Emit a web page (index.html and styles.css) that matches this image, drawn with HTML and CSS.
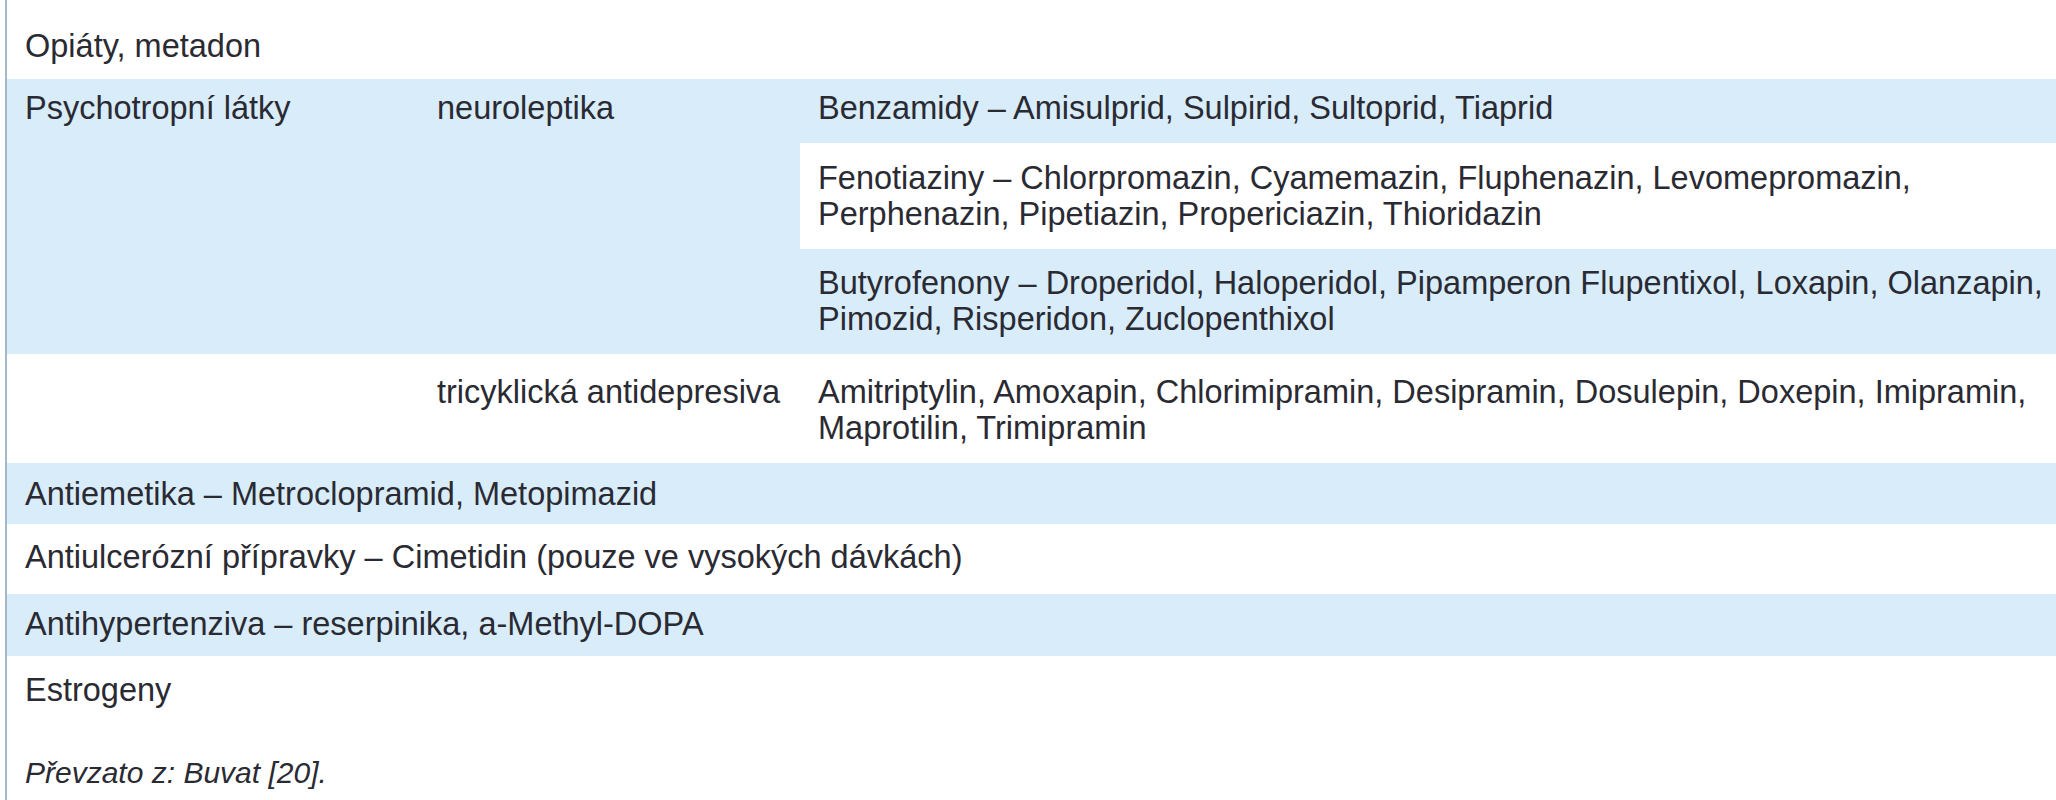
FILE: index.html
```html
<!DOCTYPE html>
<html lang="cs">
<head>
<meta charset="utf-8">
<title>Léky</title>
<link rel="stylesheet" href="styles.css">
</head>
<body>
<div class="wrap">
  <table class="drugs">
    <colgroup>
      <col class="c1">
      <col class="c2">
      <col class="c3">
    </colgroup>
    <tbody>
      <tr class="r-opiaty">
        <td colspan="3">Opiáty, metadon</td>
      </tr>
      <tr class="r-benz">
        <td rowspan="3" class="blue">Psychotropní látky</td>
        <td rowspan="3" class="blue">neuroleptika</td>
        <td class="blue">Benzamidy – Amisulprid, Sulpirid, Sultoprid, Tiaprid</td>
      </tr>
      <tr class="r-feno">
        <td class="white">Fenotiaziny – Chlorpromazin, Cyamemazin, Fluphenazin, Levomepromazin,<br>Perphenazin, Pipetiazin, Propericiazin, Thioridazin</td>
      </tr>
      <tr class="r-buty">
        <td class="blue">Butyrofenony – Droperidol, Haloperidol, Pipamperon Flupentixol, Loxapin, Olanzapin,<br>Pimozid, Risperidon, Zuclopenthixol</td>
      </tr>
      <tr class="r-tri">
        <td></td>
        <td>tricyklická antidepresiva</td>
        <td>Amitriptylin, Amoxapin, Chlorimipramin, Desipramin, Dosulepin, Doxepin, Imipramin,<br>Maprotilin, Trimipramin</td>
      </tr>
      <tr class="r-antiem blue-row">
        <td colspan="3">Antiemetika – Metroclopramid, Metopimazid</td>
      </tr>
      <tr class="r-antiulc">
        <td colspan="3">Antiulcerózní přípravky – Cimetidin (pouze ve vysokých dávkách)</td>
      </tr>
      <tr class="r-antihyp blue-row">
        <td colspan="3">Antihypertenziva – reserpinika, a-Methyl-DOPA</td>
      </tr>
      <tr class="r-estro">
        <td colspan="3">Estrogeny</td>
      </tr>
      <tr class="r-note">
        <td colspan="3"><em>Převzato z: Buvat [20].</em></td>
      </tr>
    </tbody>
  </table>
</div>
</body>
</html>
```

FILE: styles.css
```css
html, body {
  margin: 0;
  padding: 0;
  background: #ffffff;
}

body {
  font-family: "Liberation Sans", Arial, sans-serif;
  font-size: 32.5px;
  line-height: 36px;
  color: #2a2a33;
}

.wrap {
  margin-left: 5px;
  border-left: 2px solid #a3b8cb;
  min-height: 100vh;
  overflow: hidden;
}

.drugs {
  width: 100%;
  border-collapse: collapse;
  border-spacing: 0;
  table-layout: fixed;
}

.c1 { width: 412px; }
.c2 { width: 381px; }

.drugs td {
  padding: 13px 18px;
  vertical-align: top;
  white-space: nowrap;
}

.blue,
.blue-row td {
  background: #d8ecfa;
}

.white {
  background: #ffffff;
}

.r-opiaty td { padding-top: 28px; padding-bottom: 15px; }
.r-benz td { padding-top: 11px; padding-bottom: 17px; }
.r-feno td { padding-top: 17px; padding-bottom: 17px; }
.r-buty td { padding-top: 16px; padding-bottom: 17px; }
.r-tri td { padding-top: 20px; padding-bottom: 17px; }
.r-antiem td { padding-top: 13px; padding-bottom: 12px; }
.r-antiulc td { padding-top: 15px; padding-bottom: 19px; }
.r-antihyp td { padding-top: 12px; padding-bottom: 14px; }
.r-estro td { padding-top: 16px; padding-bottom: 16px; }
.r-note td { padding-top: 31px; padding-bottom: 10px; font-size: 30px; }
```
